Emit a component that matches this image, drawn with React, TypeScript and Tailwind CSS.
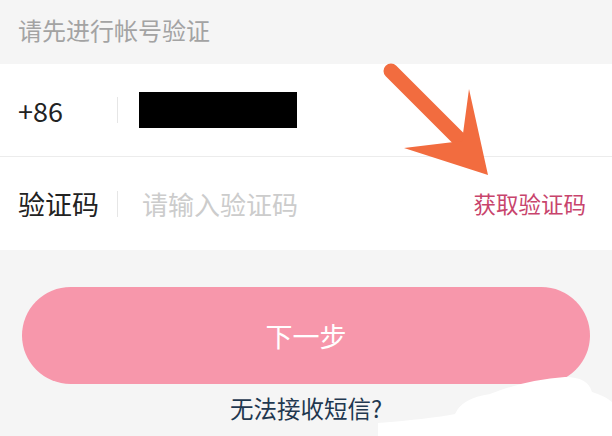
import React from "react";

export default function App() {
  return (
    <div
      className="relative w-[612px] h-[436px] overflow-hidden bg-[#f5f5f5]"
      style={{ fontFamily: '"Noto Sans CJK SC", "Noto Sans", sans-serif' }}
    >
      <div className="h-[64px] flex items-center pl-[18px] pb-[4px] text-[24px] text-[#a3a3a3] leading-none">
        请先进行帐号验证
      </div>
      <div className="bg-white">
        <div className="h-[93px] flex items-center pl-[18px] border-b border-[#ececec]">
          <div className="w-[99px] text-[27px] text-[#222] leading-none">+86</div>
          <div className="w-px h-[26px] bg-[#e6e6e6]" />
          <div className="ml-[21px] w-[158px] h-[36px] bg-black" />
        </div>
        <div className="h-[93px] flex items-center pl-[18px] pr-[26px]">
          <div className="w-[99px] text-[27px] text-[#222] leading-none">验证码</div>
          <div className="w-px h-[26px] bg-[#e6e6e6]" />
          <div className="ml-[24px] flex-1 text-[26px] text-[#cccccc] leading-none">请输入验证码</div>
          <div className="text-[22.5px] text-[#c8446c] leading-none">获取验证码</div>
        </div>
      </div>
      <div className="mt-[37px] mx-[22px] h-[97px] rounded-full bg-[#f797ab] flex items-center justify-center text-white text-[27px] leading-none">
        下一步
      </div>
      <div className="mt-[13px] text-center text-[23.5px] text-[#1f3850] leading-none">
        无法接收短信?
      </div>

      <svg className="absolute left-0 top-0 pointer-events-none" width="612" height="436" viewBox="0 0 612 436">
        <line x1="391" y1="71" x2="462" y2="142" stroke="#f26c3f" strokeWidth="15" strokeLinecap="round" />
        <polygon points="469,89 488,175 404,148 462,141" fill="#f26c3f" />
        <path
          d="M 378 436 L 378 423 Q 430 419 455 414 Q 462 398 490 394 Q 525 380 565 377 Q 588 377 592 392 Q 605 396 612 402 L 612 436 Z"
          fill="#ffffff"
        />
      </svg>
    </div>
  );
}
